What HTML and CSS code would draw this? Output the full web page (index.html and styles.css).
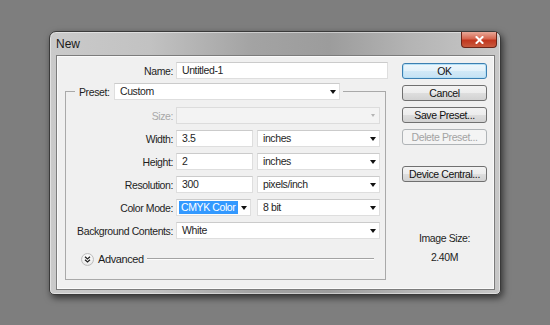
FILE: index.html
```html
<!DOCTYPE html>
<html>
<head>
<meta charset="utf-8">
<title>New</title>
<link rel="stylesheet" href="styles.css">
</head>
<body>
<div class="window">
  <div class="titlebar">
    <span class="title">New</span>
    <div class="close">
      <svg width="9" height="8" viewBox="0 0 9 8"><path d="M1.5 1 L7.5 7 M7.5 1 L1.5 7" stroke="#fff" stroke-width="2" stroke-linecap="square"/></svg>
    </div>
  </div>
  <div class="content">
    <div class="left">
      <div class="row">
        <span class="lbl lbl-name">Name:</span>
        <div class="field w-name">Untitled-1</div>
      </div>
      <fieldset class="group">
        <legend class="legend">
          <span class="legend-inner">
            <span class="lbl lbl-preset">Preset:</span>
            <span class="field select w-preset">Custom<span class="arrow"></span></span>
          </span>
        </legend>
        <div class="rows">
          <div class="row">
            <span class="lbl lbl-grp disabled">Size:</span>
            <div class="field select w-full off"><span class="arrow arrow-off"></span></div>
          </div>
          <div class="row">
            <span class="lbl lbl-grp">Width:</span>
            <div class="field w-num">3.5</div>
            <div class="field select w-unit">inches<span class="arrow"></span></div>
          </div>
          <div class="row">
            <span class="lbl lbl-grp">Height:</span>
            <div class="field w-num">2</div>
            <div class="field select w-unit">inches<span class="arrow"></span></div>
          </div>
          <div class="row">
            <span class="lbl lbl-grp">Resolution:</span>
            <div class="field w-num">300</div>
            <div class="field select w-unit">pixels/inch<span class="arrow"></span></div>
          </div>
          <div class="row">
            <span class="lbl lbl-grp">Color Mode:</span>
            <div class="field select w-mode"><span class="hl">CMYK Color</span><span class="arrow"></span></div>
            <div class="field select w-unit">8 bit<span class="arrow"></span></div>
          </div>
          <div class="row">
            <span class="lbl lbl-grp">Background Contents:</span>
            <div class="field select w-bg">White<span class="arrow"></span></div>
          </div>
        </div>
        <div class="adv">
          <span class="adv-btn">
            <svg width="7" height="7" viewBox="0 0 7 7"><path d="M1 0.8 L3.5 3 L6 0.8 M1 3.8 L3.5 6 L6 3.8" stroke="#222" stroke-width="1.3" fill="none"/></svg>
          </span>
          <span class="adv-text">Advanced</span>
          <span class="adv-line"></span>
        </div>
      </fieldset>
    </div>
    <div class="right">
      <div class="btns">
        <div class="btn ok">OK</div>
        <div class="btn">Cancel</div>
        <div class="btn">Save Preset...</div>
        <div class="btn btn-off">Delete Preset...</div>
      </div>
      <div class="btn btn-dc">Device Central...</div>
      <div class="imgsize">Image Size:</div>
      <div class="imgval">2.40M</div>
    </div>
  </div>
</div>
</body>
</html>
```
FILE: styles.css
```css
html, body {
  margin: 0;
}
body {
  background: #7e7e7e;
  padding: 31px 0 0 49px;
  height: 325px;
  box-sizing: border-box;
  overflow: hidden;
  font-family: "Liberation Sans", Arial, sans-serif;
  font-size: 10.5px;
  letter-spacing: -0.4px;
  color: #1e1e1e;
}
.window {
  width: 452px;
  height: 264px;
  box-sizing: border-box;
  border: 1px solid #3a3a3a;
  border-radius: 7px 7px 5px 5px;
  background: linear-gradient(90deg, #cacaca 0%, #c2c2c2 22%, #a3a3a3 45%, #9c9c9c 62%, #b4b4b4 80%, #c8c8c8 100%);
  box-shadow: 2px 3px 7px rgba(0,0,0,0.6), inset 0 0 0 1px rgba(255,255,255,0.45);
  padding: 0 5px 4px 6px;
  display: flex;
  flex-direction: column;
}
.titlebar {
  height: 23px;
  display: flex;
  align-items: flex-start;
  flex-shrink: 0;
}
.title {
  margin-top: 5px;
  font-size: 12px;
  letter-spacing: 0;
  color: #1a1a1a;
}
.close {
  margin-left: auto;
  margin-right: -2px;
  width: 36px;
  height: 16px;
  box-sizing: border-box;
  border: 1px solid #6a2418;
  border-top: none;
  border-radius: 0 0 4px 4px;
  background: linear-gradient(#e8a898 0%, #d6664f 45%, #c1361e 55%, #c85a3e 100%);
  display: flex;
  align-items: center;
  justify-content: center;
}
.content {
  flex: 1;
  background: #f0f0f0;
  border: 1px solid #7c7c7c;
  box-shadow: inset 0 0 0 1px #fafafa;
  display: flex;
  padding: 6px 7px 0 0;
}
.left {
  width: 331px;
  flex-shrink: 0;
}
.row {
  display: flex;
  align-items: center;
  height: 17px;
}
.lbl {
  text-align: right;
  padding-right: 3px;
  box-sizing: border-box;
  flex-shrink: 0;
  white-space: nowrap;
}
.lbl-name { width: 119px; }
.lbl-grp { width: 110px; }
.lbl-preset { width: 35px; text-align: left; padding-right: 0; }
.disabled { color: #a8a8a8; }
.field {
  height: 17px;
  box-sizing: border-box;
  background: #fff;
  border: 1px solid #dedede;
  border-top-color: #cbcbcb;
  padding-left: 5px;
  line-height: 15px;
  white-space: nowrap;
  flex-shrink: 0;
}
.select {
  display: flex;
  align-items: center;
}
.arrow {
  margin-left: auto;
  margin-right: 3px;
  width: 0;
  height: 0;
  border-left: 3.5px solid transparent;
  border-right: 3.5px solid transparent;
  border-top: 4px solid #111;
}
.arrow-off {
  border-left-width: 2.5px;
  border-right-width: 2.5px;
  border-top: 3px solid #b4b4b4;
  margin-right: 4px;
}
.w-name { width: 212px; }
.w-preset { width: 226px; }
.w-full { width: 204px; }
.w-num { width: 77px; margin-right: 4px; }
.w-unit { width: 123px; }
.w-mode { width: 75px; margin-right: 6px; padding-left: 2px; }
.w-bg { width: 204px; }
.off {
  background: #f3f3f3;
  border-color: #dcdcdc;
}
.hl {
  background: #3399ff;
  color: #fff;
  padding: 0 3px 0 2px;
  line-height: 13px;
}
.group {
  margin: 4px 0 0 8px;
  width: 321px;
  box-sizing: border-box;
  border: 1px solid #a9a9a9;
  padding: 7px 0 13px 0;
  min-width: 0;
}
.legend {
  margin-left: 9px;
  padding: 0 3px 0 4px;
}
.legend-inner {
  display: flex;
  align-items: center;
}
.rows {
  display: flex;
  flex-direction: column;
  gap: 6px;
}
.adv {
  display: flex;
  align-items: center;
  margin-top: 13px;
  height: 14px;
  padding-left: 15px;
  padding-right: 11px;
}
.adv-btn {
  width: 13px;
  height: 13px;
  box-sizing: border-box;
  border-radius: 50%;
  border: 1px solid #bdbdbd;
  background: radial-gradient(circle at 50% 35%, #ffffff 0%, #f2f2f2 55%, #d8d8d8 100%);
  display: flex;
  align-items: center;
  justify-content: center;
  flex-shrink: 0;
}
.adv-text {
  margin-left: 4px;
  font-size: 11px;
}
.adv-line {
  flex: 1;
  margin-left: 3px;
  border-top: 1px solid #a3a3a3;
  border-bottom: 1px solid #fdfdfd;
}
.right {
  margin-left: 14px;
  width: 85px;
  padding-top: 1px;
}
.btns {
  display: flex;
  flex-direction: column;
  gap: 6px;
}
.btn {
  height: 16px;
  box-sizing: border-box;
  border: 1px solid #707070;
  border-radius: 3px;
  background: linear-gradient(#f3f3f3 0%, #ececec 50%, #dedede 51%, #d2d2d2 100%);
  text-align: center;
  line-height: 14px;
  color: #111;
}
.ok {
  border-color: #3c7fb1;
  box-shadow: inset 0 0 0 1px #b6e0f6;
  background: linear-gradient(#eef7fc 0%, #e3f1fa 50%, #d2e9f7 51%, #c6e2f4 100%);
}
.btn-off {
  color: #a3a3a3;
  border-color: #b0b4b7;
  background: #f4f4f4;
}
.btn-dc {
  margin-top: 21px;
}
.imgsize {
  margin-top: 49px;
  text-align: center;
  line-height: 14px;
}
.imgval {
  margin-top: 5px;
  text-align: center;
  line-height: 14px;
}
```
